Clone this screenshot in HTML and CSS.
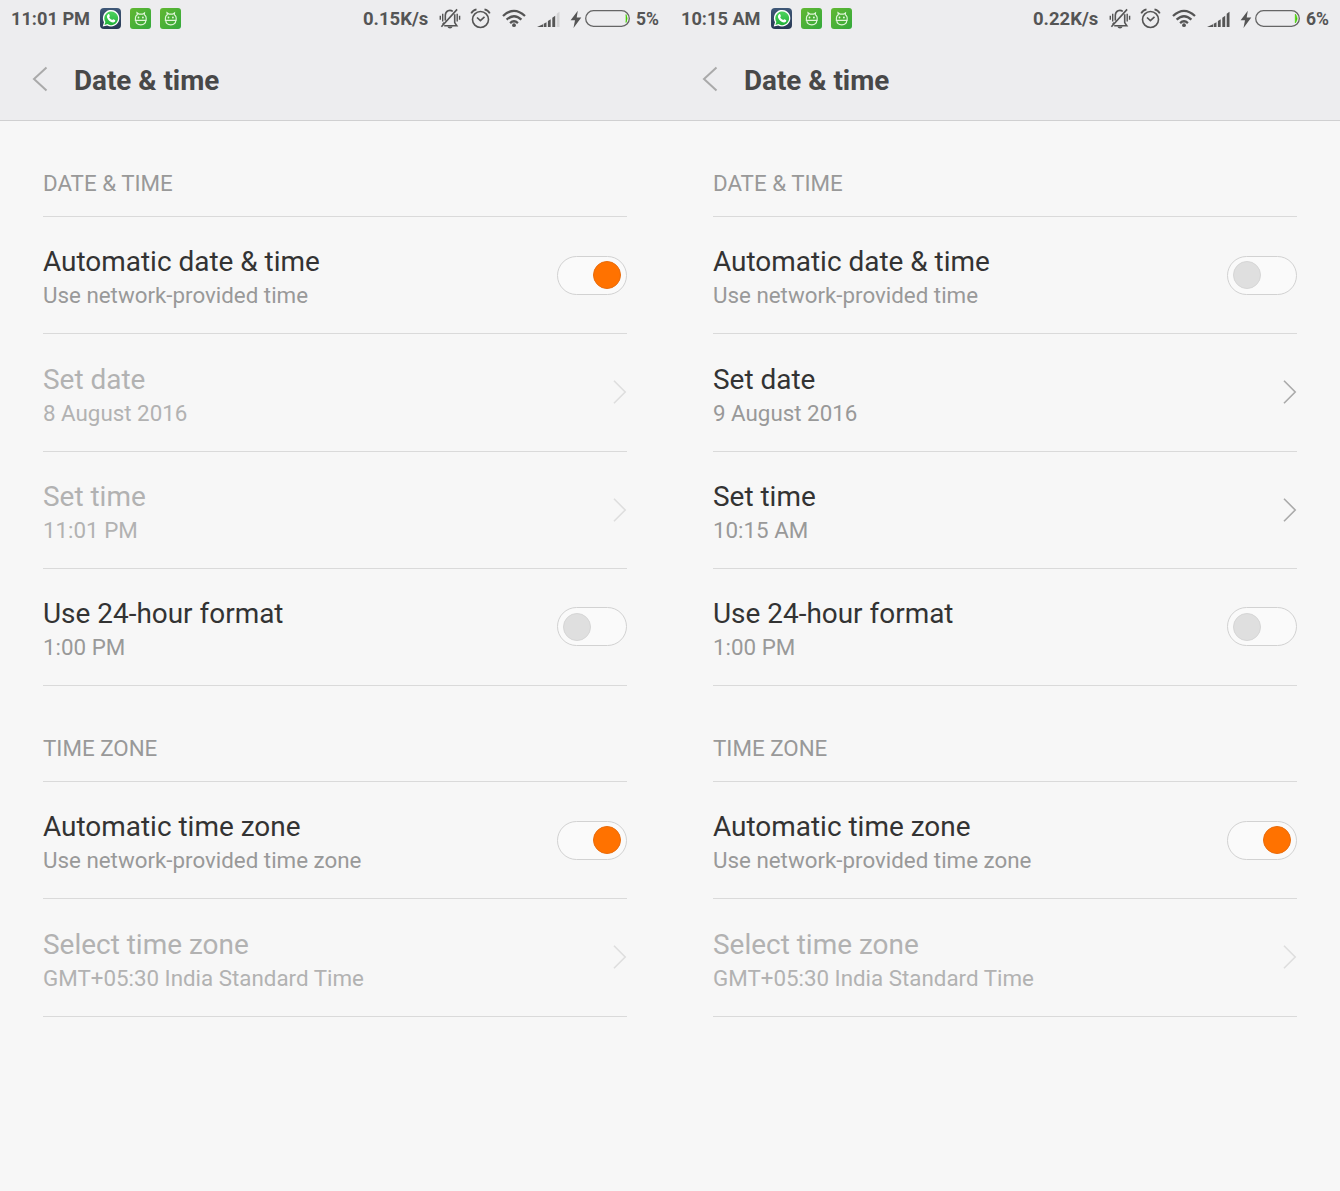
FILE: index.html
```html
<!DOCTYPE html>
<html lang="en">
<head>
<meta charset="utf-8">
<title>Date &amp; time</title>
<link rel="stylesheet" href="styles.css">
</head>
<body>
<svg class="sprite" aria-hidden="true">
  <defs>
    <linearGradient id="navy" x1="0" y1="0" x2="0" y2="1"><stop offset="0" stop-color="#3f5878"/><stop offset="1" stop-color="#273853"/></linearGradient>
    <linearGradient id="leaf" x1="0" y1="0" x2="1" y2="1"><stop offset="0" stop-color="#62b832"/><stop offset="1" stop-color="#34a93c"/></linearGradient>
    <linearGradient id="chat" x1="0" y1="0" x2="0" y2="1"><stop offset="0" stop-color="#4fd45f"/><stop offset="1" stop-color="#22b13a"/></linearGradient>
  </defs>
  <symbol id="whatsapp" viewBox="0 0 21 21">
    <rect width="21" height="21" rx="4" fill="url(#navy)"/>
    <path d="M2.700 18.500 4 14.300A8.200 8.200 0 1 1 7.200 17.400Z" fill="#fff"/>
    <path d="M4.400 16.900 5.400 14A6.900 6.900 0 1 1 7.500 16.100Z" fill="url(#chat)"/>
    <path d="M8.200 6.200c.5-.3.9-.2 1.100.3l.6 1.400c.1.4-.3.8-.7 1.300.7 1.400 1.700 2.200 3.100 2.900.5-.6.8-1 1.200-.9l1.500.8c.5.3.3 1.600-.5 2.100-1.100.8-2.600.4-4.300-.7-1.700-1.200-2.900-2.700-3.200-4.200-.2-1.300.4-2.400 1.200-3Z" fill="#fff"/>
  </symbol>
  <symbol id="bugdroid" viewBox="0 0 21 21">
    <rect width="21" height="21" rx="3" fill="url(#leaf)"/>
    <path d="M5.500 12.200C5.100 9.600 5.800 7.700 7.300 6.800L7 4.800 9 6.100H12.600L14.500 4.800 14.300 6.800C15.800 7.700 16.500 9.600 16.100 12.200M4.800 12.300H16.700M5.800 12.600C6 18.200 15.600 18.200 15.800 12.600" fill="none" stroke="#dff5d8" stroke-width="1.150"/>
    <circle cx="8.500" cy="9.500" r=".9" fill="#e6f7e0"/><circle cx="12.900" cy="9.500" r=".9" fill="#e6f7e0"/>
  </symbol>
  <symbol id="silent" viewBox="0 0 22 24">
    <g fill="none" stroke="#555" stroke-width="1.600">
      <path d="M13.800 4.400C11 2.300 6.500 3.400 6.300 8.200V13.500M15.700 7.300V15.600L17.800 18.800H5.200M3.600 17.600 5.400 15.600M18.100 2.400 2.400 19.800"/>
      <path d="M1.300 8.800V12.800M3.700 6.800V14.600M18.200 6.800V14.600M20.600 8.800V12.800" stroke-width="1.400"/>
    </g>
    <path d="M8.300 19.500H13.700Q13 21.500 11 21.500T8.300 19.500Z" fill="#555"/>
  </symbol>
  <symbol id="alarm" viewBox="0 0 21 24">
    <g fill="none" stroke="#555" stroke-width="1.600">
      <circle cx="10.500" cy="12.500" r="8"/><path d="M7 10.500 10.400 13.700 14.500 9.900"/>
      <path d="M1.200 6.300Q3 2.900 6.500 2.300M19.800 6.300Q18 2.900 14.500 2.300" stroke-width="1.800"/>
    </g>
  </symbol>
  <symbol id="wifi" viewBox="0 0 24 24">
    <g fill="none" stroke="#555" stroke-width="2.300"><path d="M1 9Q12 -1.300 23 9M4.600 12.700Q12 5.700 19.400 12.700M8.100 16.100Q12 12.400 15.900 16.100"/></g>
    <circle cx="12" cy="18.200" r="1.900" fill="#555"/>
  </symbol>
  <symbol id="signal" viewBox="0 0 24 24">
    <path d="M0 20 6 17.300V20ZM6.700 16.800 9.500 15.200V20H6.700ZM10.900 14 13.700 12.300V20H10.900ZM15.300 10.800 18.200 8.800V20H15.300Z" fill="#555"/>
    <path d="M19.700 6.800 22.500 4.700V20H19.700Z" fill="currentColor"/>
  </symbol>
  <symbol id="bolt" viewBox="0 0 12 24"><path d="M7.800 3.700.6 13.200H5L3.500 21 11.300 10.600H6.700Z" fill="#555"/></symbol>
  <symbol id="back" viewBox="0 0 16 26"><path d="M14.500 1.500 2 13 14.500 24.500" fill="none" stroke="#aaa" stroke-width="2"/></symbol>
  <symbol id="next" viewBox="0 0 14 24"><path d="M1 .8 12.200 12 1 23.200" fill="none" stroke="currentColor" stroke-width="1.600"/></symbol>
</svg>

<main class="screens">
  <section class="phone">
    <header class="top">
      <div class="status">
        <span class="clock">11:01 PM</span>
        <svg class="app"><use href="#whatsapp"/></svg><svg class="app"><use href="#bugdroid"/></svg><svg class="app"><use href="#bugdroid"/></svg>
        <div class="tray">
          <span class="speed">0.15K/s</span>
          <svg class="silent"><use href="#silent"/></svg><svg class="alarm"><use href="#alarm"/></svg><svg class="wifi"><use href="#wifi"/></svg><svg class="signal weak"><use href="#signal"/></svg><svg class="bolt"><use href="#bolt"/></svg>
          <svg class="battery" viewBox="0 0 45 17"><rect x=".7" y=".7" width="43.600" height="15.600" rx="7.800" fill="none" stroke="#666" stroke-width="1.300"/><path d="M41 4.500Q43.200 8.500 41 12.500Z" fill="#43cf00" stroke="#43cf00" stroke-width=".6"/></svg>
          <span class="percent">5%</span>
        </div>
      </div>
      <div class="bar"><svg class="back"><use href="#back"/></svg><h1>Date &amp; time</h1></div>
    </header>
    <div class="list">
      <h2>DATE &amp; TIME</h2>
      <div class="row"><div class="label"><h3>Automatic date &amp; time</h3><p>Use network-provided time</p></div><span class="switch on"></span></div>
      <div class="row disabled"><div class="label"><h3>Set date</h3><p>8 August 2016</p></div><svg class="next"><use href="#next"/></svg></div>
      <div class="row disabled"><div class="label"><h3>Set time</h3><p>11:01 PM</p></div><svg class="next"><use href="#next"/></svg></div>
      <div class="row"><div class="label"><h3>Use 24-hour format</h3><p>1:00 PM</p></div><span class="switch"></span></div>
      <h2>TIME ZONE</h2>
      <div class="row"><div class="label"><h3>Automatic time zone</h3><p>Use network-provided time zone</p></div><span class="switch on"></span></div>
      <div class="row disabled"><div class="label"><h3>Select time zone</h3><p>GMT+05:30 India Standard Time</p></div><svg class="next"><use href="#next"/></svg></div>
    </div>
  </section>

  <section class="phone">
    <header class="top">
      <div class="status">
        <span class="clock wide">10:15 AM</span>
        <svg class="app"><use href="#whatsapp"/></svg><svg class="app"><use href="#bugdroid"/></svg><svg class="app"><use href="#bugdroid"/></svg>
        <div class="tray">
          <span class="speed">0.22K/s</span>
          <svg class="silent"><use href="#silent"/></svg><svg class="alarm"><use href="#alarm"/></svg><svg class="wifi"><use href="#wifi"/></svg><svg class="signal"><use href="#signal"/></svg><svg class="bolt"><use href="#bolt"/></svg>
          <svg class="battery" viewBox="0 0 45 17"><rect x=".7" y=".7" width="43.600" height="15.600" rx="7.800" fill="none" stroke="#666" stroke-width="1.300"/><path d="M40.300 4Q43.800 8.500 40.300 13Z" fill="#43cf00" stroke="#43cf00" stroke-width=".6"/></svg>
          <span class="percent">6%</span>
        </div>
      </div>
      <div class="bar"><svg class="back"><use href="#back"/></svg><h1>Date &amp; time</h1></div>
    </header>
    <div class="list">
      <h2>DATE &amp; TIME</h2>
      <div class="row"><div class="label"><h3>Automatic date &amp; time</h3><p>Use network-provided time</p></div><span class="switch"></span></div>
      <div class="row"><div class="label"><h3>Set date</h3><p>9 August 2016</p></div><svg class="next"><use href="#next"/></svg></div>
      <div class="row"><div class="label"><h3>Set time</h3><p>10:15 AM</p></div><svg class="next"><use href="#next"/></svg></div>
      <div class="row"><div class="label"><h3>Use 24-hour format</h3><p>1:00 PM</p></div><span class="switch"></span></div>
      <h2>TIME ZONE</h2>
      <div class="row"><div class="label"><h3>Automatic time zone</h3><p>Use network-provided time zone</p></div><span class="switch on"></span></div>
      <div class="row disabled"><div class="label"><h3>Select time zone</h3><p>GMT+05:30 India Standard Time</p></div><svg class="next"><use href="#next"/></svg></div>
    </div>
  </section>
</main>
</body>
</html>
```
FILE: styles.css
```css
*, *::before { box-sizing: border-box; margin: 0; padding: 0; }
body { background: #f7f7f7; font-family: Roboto, "Liberation Sans", sans-serif; }
svg { display: block; flex: none; }
.sprite { position: absolute; width: 0; height: 0; }
.screens { display: grid; grid-template-columns: 670px 670px; height: 1191px; overflow: hidden; }
.top { height: 121px; background: #ededef; border-bottom: 1px solid #d0d0d1; }

.status { display: flex; align-items: center; height: 37px; padding: 0 11px; color: #555; font-size: 18.200px; font-weight: 700; white-space: nowrap; }
.clock { width: 80px; margin-right: 9px; }
.clock.wide { width: 81px; }
.app { width: 21px; height: 21px; margin-right: 9px; }
.tray { display: flex; align-items: center; margin-left: auto; }
.speed { width: 66px; margin-right: 10px; font-size: 18.500px; }
.silent { width: 22px; height: 24px; margin-right: 9px; }
.alarm { width: 21px; height: 24px; margin-right: 10.500px; }
.wifi { width: 24px; height: 24px; margin-right: 11px; }
.signal { width: 24px; height: 24px; margin-right: 9px; color: #555; }
.signal.weak { color: #d3d3d4; }
.bolt { width: 12px; height: 24px; margin-right: 3.500px; }
.battery { width: 45px; height: 17px; margin-right: 6px; }
.percent { width: 23px; font-size: 17.500px; }

.bar { display: flex; align-items: center; height: 84px; padding: 1px 0 0 32px; }
.back { width: 16px; height: 26px; margin: -2px 26px 0 0; }
h1 { padding-top: 2px; color: #484848; font-size: 27.800px; line-height: 34px; font-weight: 700; }

.list { padding: 0 43px; }
h2 { height: 96px; padding-top: 48px; border-bottom: 1px solid #dadada; color: #999; font-size: 22.350px; line-height: 28px; font-weight: 400; }
.row { display: flex; align-items: center; justify-content: space-between; height: 117.250px; border-bottom: 1px solid #dadada; }
.label { padding: 5.700px 0 1px; }
h3 { color: #333; font-size: 27.950px; line-height: 36px; font-weight: 400; }
p { color: #999; font-size: 22.350px; line-height: 30px; }
.next { width: 14px; height: 24px; color: #aaa; }
.disabled h3, .disabled p { color: #b2b2b2; }
.disabled .next { color: #dedede; }
.switch { display: flex; align-items: center; width: 70px; height: 39px; padding: 0 5px; border: 1px solid #d2d2d2; border-radius: 20px; background: #fafafa; }
.switch::before { content: ""; width: 28px; height: 28px; border: 1px solid #d6d6d6; border-radius: 50%; background: #dfdfdf; }
.switch.on { justify-content: flex-end; }
.switch.on::before { border-color: #e96c0c; background: #ff7200; }
```
